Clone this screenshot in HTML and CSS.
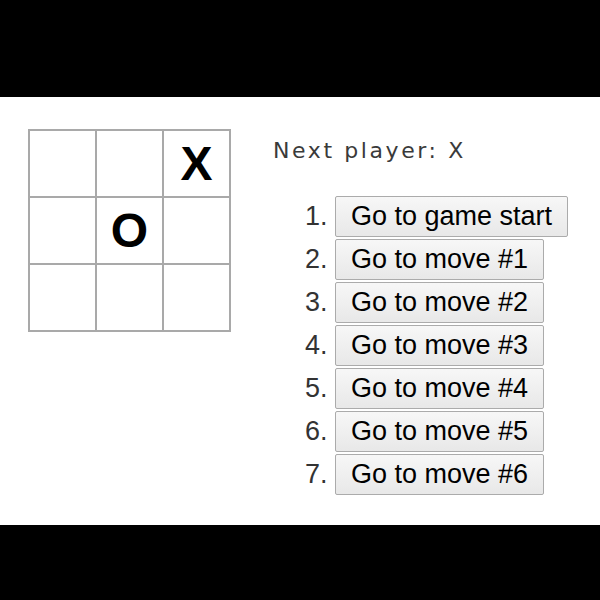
FILE: index.html
```html
<!DOCTYPE html>
<html>
<head>
<meta charset="utf-8">
<link rel="stylesheet" href="styles.css">
</head>
<body>
<div class="bar"></div>
<main class="game">
  <div class="board">
    <div class="cell"></div><div class="cell"></div><div class="cell">X</div>
    <div class="cell"></div><div class="cell">O</div><div class="cell"></div>
    <div class="cell"></div><div class="cell"></div><div class="cell"></div>
  </div>
  <div class="info">
    <div class="status">Next player: X</div>
    <ol class="moves">
      <li><button class="btn">Go to game start</button></li>
      <li><button class="btn">Go to move #1</button></li>
      <li><button class="btn">Go to move #2</button></li>
      <li><button class="btn">Go to move #3</button></li>
      <li><button class="btn">Go to move #4</button></li>
      <li><button class="btn">Go to move #5</button></li>
      <li><button class="btn">Go to move #6</button></li>
    </ol>
  </div>
</main>
<div class="bar bottom"></div>
</body>
</html>
```
FILE: styles.css
```css
html, body {
  margin: 0;
  padding: 0;
  background: #000;
  width: 600px;
  height: 600px;
  overflow: hidden;
}
.bar {
  height: 97px;
  background: #000;
}
.bar.bottom {
  height: 75px;
}
.game {
  background: #fff;
  height: 428px;
  box-sizing: border-box;
  display: flex;
  align-items: flex-start;
  padding: 32px 0 0 28px;
}
.board {
  display: grid;
  grid-template-columns: repeat(3, 67px);
  grid-template-rows: repeat(3, 67px);
  border-left: 2px solid #a9a9a9;
  border-top: 2px solid #a9a9a9;
}
.cell {
  border-right: 2px solid #a9a9a9;
  border-bottom: 2px solid #a9a9a9;
  display: flex;
  align-items: center;
  justify-content: center;
  font-family: "Liberation Sans", Arial, sans-serif;
  font-weight: bold;
  font-size: 48px;
  color: #000;
  line-height: 1;
}
.info {
  margin-left: 42px;
}
.status {
  font-family: "DejaVu Sans", sans-serif;
  font-size: 22px;
  letter-spacing: 2.6px;
  color: #3a3a3a;
  margin-top: 8px;
  line-height: 28px;
}
.moves {
  margin: 31px 0 0 0;
  padding-left: 62px;
  font-family: "Liberation Sans", Arial, sans-serif;
  font-size: 27px;
  color: #333;
}
.moves li {
  margin-bottom: 2px;
  line-height: 41px;
  height: 41px;
}
.btn {
  font-family: "Liberation Sans", Arial, sans-serif;
  font-size: 27px;
  color: #000;
  height: 41px;
  padding: 0 15px;
  border: 1px solid #ababab;
  border-radius: 2px;
  background: linear-gradient(#f7f7f7, #e8e8e8);
  vertical-align: top;
  line-height: 39px;
}
```
